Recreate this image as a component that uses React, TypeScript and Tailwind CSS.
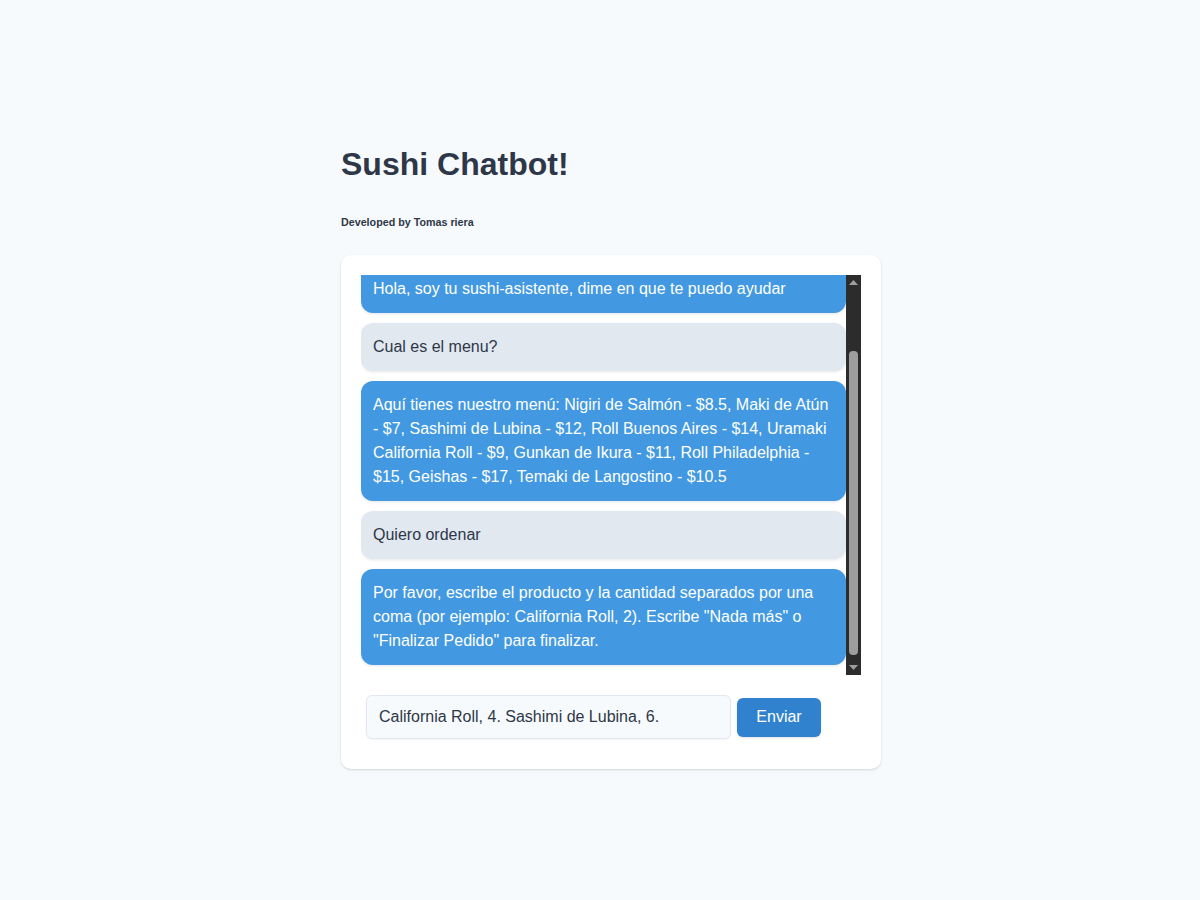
import React, { useEffect, useRef } from "react";

const messages: { from: "bot" | "user"; text: string }[] = [
  { from: "bot", text: "Hola, soy tu sushi-asistente, dime en que te puedo ayudar" },
  { from: "user", text: "Cual es el menu?" },
  {
    from: "bot",
    text: "Aquí tienes nuestro menú: Nigiri de Salmón - $8.5, Maki de Atún - $7, Sashimi de Lubina - $12, Roll Buenos Aires - $14, Uramaki California Roll - $9, Gunkan de Ikura - $11, Roll Philadelphia - $15, Geishas - $17, Temaki de Langostino - $10.5",
  },
  { from: "user", text: "Quiero ordenar" },
  {
    from: "bot",
    text: 'Por favor, escribe el producto y la cantidad separados por una coma (por ejemplo: California Roll, 2). Escribe "Nada más" o "Finalizar Pedido" para finalizar.',
  },
];

export default function App() {
  const ref = useRef<HTMLDivElement>(null);
  useEffect(() => {
    if (ref.current) ref.current.scrollTop = ref.current.scrollHeight;
  }, []);
  return (
    <div
      className="min-h-[900px] w-full bg-[#f7fafc] text-[#2d3748]"
      style={{ fontFamily: '"Liberation Sans", Arial, sans-serif' }}
    >
      <div className="ml-[341px] w-[540px] pt-[146px]">
        <h1 className="text-[32px] font-bold leading-[37px]">Sushi Chatbot!</h1>
        <h6 className="mt-[33px] text-[10.72px] font-bold leading-[12px]">Developed by Tomas riera</h6>
        <div className="mt-[27px] rounded-[10px] bg-white p-5 shadow-[0_1px_3px_rgba(0,0,0,0.1),0_1px_2px_rgba(0,0,0,0.06)]">
          <div className="flex h-[400px]">
            <div
              ref={ref}
              className="h-full flex-1 overflow-y-scroll [scrollbar-width:none] [&::-webkit-scrollbar]:hidden"
            >
              {messages.map((m, i) => (
                <div
                  key={i}
                  className={
                    "mb-[10px] rounded-xl px-3 py-3 text-base leading-6 shadow-[0_1px_3px_rgba(0,0,0,0.1)] " +
                    (m.from === "bot" ? "bg-[#4299e1] text-white" : "bg-[#e2e8f0] text-[#2d3748]")
                  }
                >
                  {m.text}
                </div>
              ))}
            </div>
            <div className="flex w-[15px] flex-col bg-[#2c2c2c]">
              <div className="flex h-[15px] items-center justify-center">
                <svg width="9" height="5" viewBox="0 0 9 5">
                  <polygon points="0,5 4.5,0 9,5" fill="#9e9e9e" />
                </svg>
              </div>
              <div className="flex flex-1 flex-col items-center pt-[61px] pb-[5px]">
                <div className="w-[9px] flex-1 rounded-[4px] bg-[#9e9e9e]" />
              </div>
              <div className="flex h-[15px] items-center justify-center">
                <svg width="9" height="5" viewBox="0 0 9 5">
                  <polygon points="0,0 9,0 4.5,5" fill="#9e9e9e" />
                </svg>
              </div>
            </div>
          </div>
          <div className="mt-5 flex items-center pb-[10px] pl-[5px]">
            <input
              readOnly
              value="California Roll, 4. Sashimi de Lubina, 6."
              className="h-[44px] w-[365px] rounded-md border border-[#e2e8f0] bg-[#f7fafc] px-3 text-base text-[#2d3748] shadow-[0_1px_2px_rgba(0,0,0,0.05)] outline-none"
            />
            <button className="ml-[6px] h-[39px] w-[84px] rounded-md bg-[#3182ce] text-base text-white shadow-sm">
              Enviar
            </button>
          </div>
        </div>
      </div>
    </div>
  );
}
